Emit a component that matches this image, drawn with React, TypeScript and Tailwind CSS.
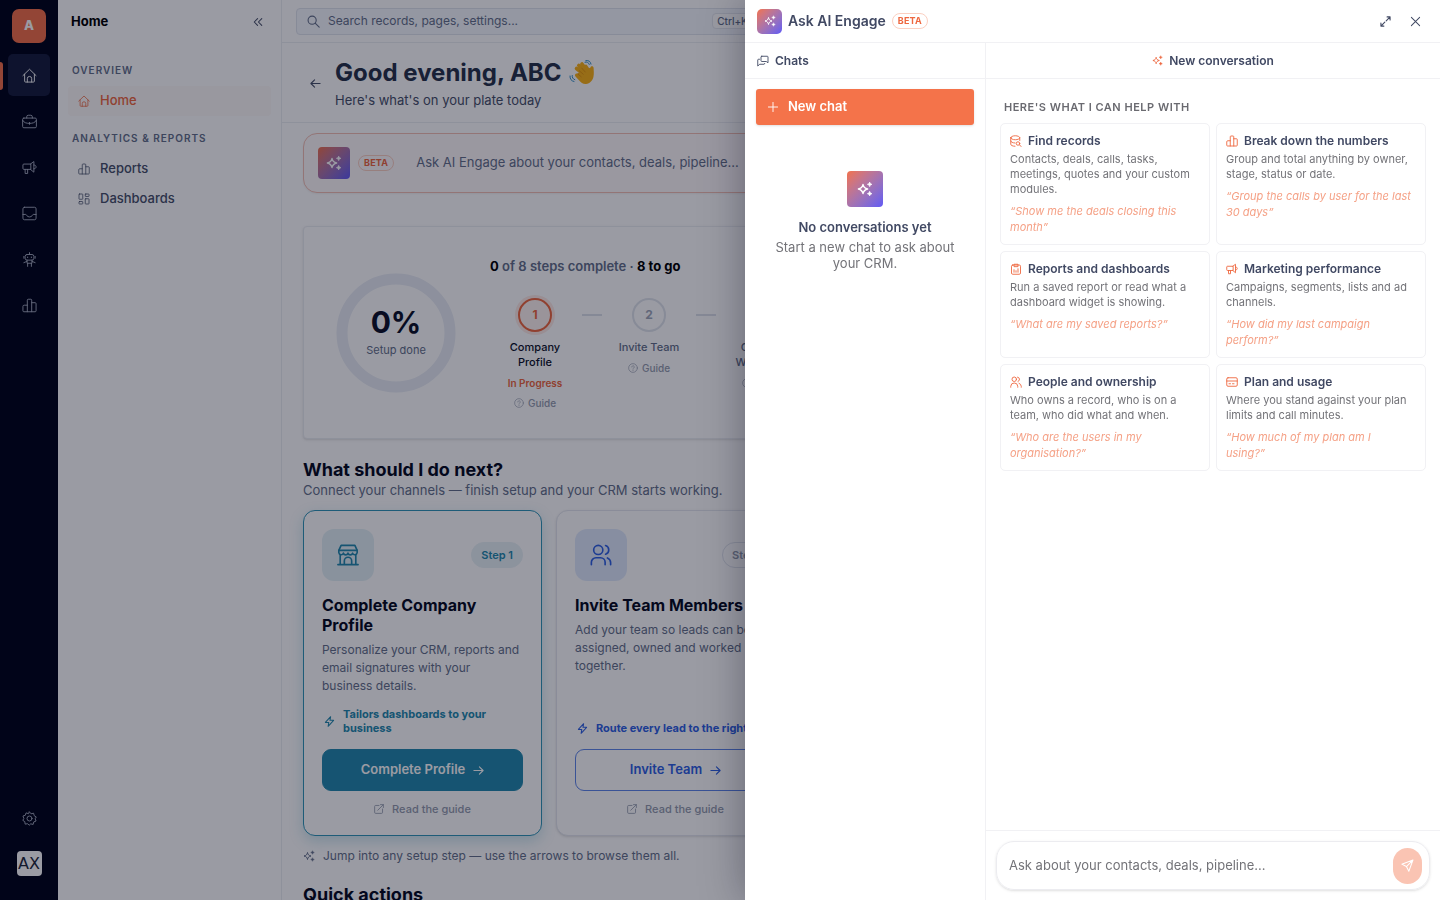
import React, { useState } from 'react';

type IconProps = { className?: string };

type IconName =
  | 'home' | 'briefcase' | 'megaphone' | 'inbox' | 'robot' | 'chart' | 'grid' | 'gear' | 'search'
  | 'back' | 'collapse' | 'help' | 'store' | 'users' | 'bolt' | 'arrow' | 'external' | 'chats'
  | 'plus' | 'expand' | 'close' | 'database' | 'clipboard' | 'people' | 'card' | 'send';

const ICONS: Record<IconName, React.ReactNode> = {
  home: (
    <>
      <path d="M1.5 12.2 12 2l10.5 10.2" />
      <path d="M4.2 10v11a1.5 1.5 0 0 0 1.5 1.5h12.6a1.5 1.5 0 0 0 1.5-1.5V10" />
      <path d="M8.5 22.5V17a3.5 3.5 0 0 1 7 0v5.5" />
    </>
  ),
  briefcase: (
    <>
      <rect x="1" y="6.5" width="22" height="15.5" rx="2" />
      <path d="M7.5 6.5V4.5A2.5 2.5 0 0 1 10 2h4a2.5 2.5 0 0 1 2.5 2.5v2M1 10c2 4 6 5 11 5s9-1 11-5M12 13.5v3" />
    </>
  ),
  megaphone: (
    <>
      <path d="M13.5 6.5H3A1.5 1.5 0 0 0 1.5 8v5.5A1.5 1.5 0 0 0 3 15h10.5z" />
      <path d="M13.5 6.5 19 2.5v17L13.5 15M19 8c2.2 0 3.5 1.2 3.5 3S21.2 14 19 14M5 15v6.5h4V15" />
    </>
  ),
  inbox: (
    <>
      <rect x="1.5" y="2" width="21" height="20" rx="2.5" />
      <path d="M1.5 13.5h4.5c1.5 0 1.5 4 6 4s4.5-4 6-4h4.5" />
    </>
  ),
  robot: (
    <>
      <rect x="5" y="4" width="14" height="9" rx="3" />
      <path d="M12 1v3M3 7v3M21 7v3M9 8v1M15 8v1M8 13v5h8v-5M8 15l-5 2M16 15l5 2M9 18v5M15 18v5" />
    </>
  ),
  chart: (
    <>
      <path d="M8.5 22V3.5A1.5 1.5 0 0 1 10 2h4a1.5 1.5 0 0 1 1.5 1.5V22" />
      <path d="M8.5 11.5h-5A2 2 0 0 0 1.5 13.5v7A1.5 1.5 0 0 0 3 22h18a1.5 1.5 0 0 0 1.5-1.5V9a1.5 1.5 0 0 0-1.5-1.5h-5.5" />
    </>
  ),
  grid: (
    <>
      <rect x="2" y="2" width="7.5" height="10.5" rx="1" />
      <rect x="2" y="17" width="7.5" height="5" rx="1" />
      <rect x="14.5" y="2" width="7.5" height="5" rx="1" />
      <rect x="14.5" y="11.5" width="7.5" height="10.5" rx="1" />
    </>
  ),
  gear: (
    <>
      <circle cx="12" cy="12" r="4" />
      <path d="M12 1.5 14.5 4.5 18.5 3.5 19.5 7.5 22.8 9.5 21 12.5 22.5 16 18.8 17.5 17.8 21.5 14 20.5 11.5 22.8 9 20.3 5 21 4.5 17 1.3 15 3 11.8 1.5 8 5.3 6.8 6.5 3 10 4.2z" />
    </>
  ),
  search: <><circle cx="9.5" cy="9.5" r="7.5" /><path d="m15 15 7.5 7.5" /></>,
  back: <path d="M22 12H2M10 4l-8 8 8 8" />,
  collapse: <path d="m11 4-8 8 8 8M21 4l-8 8 8 8" />,
  help: (
    <>
      <circle cx="12" cy="12" r="10.5" />
      <path d="M9 9.5a3 3 0 1 1 4.5 2.6c-1 .6-1.5 1-1.5 2.2M12 17.2v.8" />
    </>
  ),
  store: (
    <>
      <path d="M4.5 1.5h15l2.5 5.5v2.5a2.6 2.6 0 0 1-5 .5 2.6 2.6 0 0 1-5 0 2.6 2.6 0 0 1-5 0 2.6 2.6 0 0 1-5-.5V7z" />
      <path d="M2 7h20M3.5 12v10.5M20.5 12v10.5M1 22.5h22M8 22.5V18.5a4 4 0 0 1 8 0v4" />
    </>
  ),
  users: (
    <>
      <circle cx="9" cy="6.5" r="5" />
      <path d="M1.5 22.5v-2.5a5 5 0 0 1 5-5h5a5 5 0 0 1 5 5v2.5M17 1.7a5 5 0 0 1 0 9.5M19 15.2c2.5 1 3.5 2.8 3.5 5.3v2" />
    </>
  ),
  bolt: <path d="M14.5 1.5 3 14h7.5L9 22.5 21 9.5h-8z" />,
  arrow: <path d="M2 12h20M14 4l8 8-8 8" />,
  external: <path d="M12 3.5H4A2.5 2.5 0 0 0 1.5 6v14A2.5 2.5 0 0 0 4 22.5h14a2.5 2.5 0 0 0 2.5-2.5v-8M15.5 1.5h7v7M22.5 1.5 9 15" />,
  chats: (
    <>
      <path d="M9.5 2.5h11A1.5 1.5 0 0 1 22 4v11.5l-3.5-2.5h-9A1.5 1.5 0 0 1 8 11.5V4a1.5 1.5 0 0 1 1.5-1.5z" />
      <path d="M5 8.5H3A1.5 1.5 0 0 0 1.5 10v12l4-3.5h8.5a1.5 1.5 0 0 0 1.5-1.5" />
    </>
  ),
  plus: <path d="M12 1v22M1 12h22" />,
  expand: <path d="M15.5 2H22v6.500M22 2l-8.500 8.500M8.500 22H2v-6.500M2 22l8.500-8.500" />,
  close: <path d="m3 3 18 18M21 3 3 21" />,
  database: (
    <>
      <path d="M1.5 5.5c0-2 4-4 9-4s9 2 9 4-4 4-9 4-9-2-9-4zM1.5 5.5v13c0 2 3.5 4 8.5 4M19.5 5.5V11M1.5 12c0 2 4 4 8.5 4" />
      <circle cx="16" cy="17" r="3.5" />
      <path d="m19 20 3.5 3" />
    </>
  ),
  clipboard: (
    <>
      <rect x="3" y="4" width="18" height="18.5" rx="2.5" />
      <path d="M8 6.5V2.5h8v4zM8 18.5v-5M12 18.5v-3M16 18.5v-7" />
    </>
  ),
  people: (
    <>
      <circle cx="8.5" cy="6.5" r="4.5" />
      <path d="M1.5 22.5v-2A7 7 0 0 1 8.5 14a7 7 0 0 1 7 6.5v2M15 2.2a4.5 4.5 0 0 1 1 8.7M18 14.5a7 7 0 0 1 4.5 6v2" />
    </>
  ),
  card: (
    <>
      <rect x="1.5" y="3.5" width="21" height="17" rx="2.5" />
      <path d="M1.5 10h21M6 15.5h3M13 15.5h3" />
    </>
  ),
  send: <path d="M22 2 1.5 9.5l8.5 4.5 4.5 8.5zM22 2 10 14" />,
};

const Icon: React.FC<IconProps & { name: IconName; stroke?: number }> = ({ name, stroke = 1.5, className = 'size-4' }) => (
  <svg aria-hidden="true" viewBox="0 0 24 24" fill="none" stroke="currentColor" strokeWidth={stroke} strokeLinecap="round" strokeLinejoin="round" className={`shrink-0 ${className}`}>
    {ICONS[name]}
  </svg>
);

const Sparkles: React.FC<IconProps> = ({ className = 'size-4' }) => (
  <svg aria-hidden="true" viewBox="0 0 24 24" className={`shrink-0 ${className}`}>
    <path d="M9 5c.8 4.2 2.3 5.9 7 7-4.7 1.1-6.2 2.8-7 7-.8-4.2-2.3-5.9-7-7 4.7-1.1 6.2-2.8 7-7z" fill="none" stroke="currentColor" strokeWidth="2" strokeLinejoin="round" />
    <path d="M19 1.5c.5 2 1.2 2.7 3.5 3.5-2.3.8-3 1.5-3.5 3.5-.5-2-1.2-2.7-3.5-3.5 2.3-.8 3-1.5 3.5-3.5zM19 15.5c.5 2 1.2 2.7 3.5 3.5-2.3.8-3 1.5-3.5 3.5-.5-2-1.2-2.7-3.5-3.5 2.3-.8 3-1.5 3.5-3.5z" fill="currentColor" stroke="currentColor" />
  </svg>
);

const WavingHand = () => (
  <svg role="img" aria-label="Waving hand" viewBox="0 0 26 26" className="size-[26px]">
    <g stroke="#fbb216" strokeLinecap="round" strokeWidth="3.6">
      <path d="M14.5 14 7.5 8.5M16.5 12 9.8 5.5M18.5 11l-5.5-7M20.5 12l-3.7-5.5" />
    </g>
    <path d="M9 13 18.5 9l3-1.5c.2-1.5 3-1.8 3.1.5.1 3 .5 5.5-.1 8.5-.7 4-3.5 7-7.5 7.5-3 .2-5-1.5-7-3.8L6.5 16.5c-1.5-2 .5-3.8 2.2-2.7z" fill="#fbb216" />
    <path d="m8.5 13.7 4 3.3M10 10.5l4.5 4M12.5 7.8l4 4.5" stroke="#d98b0b" strokeWidth="0.7" fill="none" />
    <path d="M16 2.2c2-.6 3.7.3 4.3 2.2M16.8 0.6c3-.6 4.8 1 5.2 3.5M3.2 15.5c-.3 2 .8 3.6 2.6 4.2M1 16c-.2 3 1.3 5 4 5.5" stroke="#3592c9" strokeWidth="1" strokeLinecap="round" fill="none" />
  </svg>
);

const AiBadge: React.FC<{ className: string; icon: string }> = ({ className, icon }) => (
  <span className={`flex shrink-0 items-center justify-center bg-linear-135 from-[#f27148] to-[#6258f5] text-white ${className}`}>
    <Sparkles className={icon} />
  </span>
);

const BetaTag = () => (
  <span className="rounded-full border border-[#fbd0c2] px-[5px] text-[9px] leading-[14px] font-bold tracking-wide text-[#ee6840]">BETA</span>
);

const RAIL: { name: IconName; label: string }[] = [
  { name: 'home', label: 'Home' },
  { name: 'briefcase', label: 'Sales' },
  { name: 'megaphone', label: 'Marketing' },
  { name: 'inbox', label: 'Inbox' },
  { name: 'robot', label: 'Automation' },
  { name: 'chart', label: 'Analytics' },
];

const Rail = () => (
  <nav aria-label="Modules" className="flex w-[58px] shrink-0 flex-col items-center bg-[#000419] text-[#a8aec0]">
    <a href="#home" className="mt-[9px] flex size-[34px] items-center justify-center rounded-[7px] bg-[#f4714a] text-[13px] font-extrabold text-white">A</a>
    <div className="mt-[11px] flex w-full flex-col items-center gap-1">
      {RAIL.map((item, i) => (
        <a
          key={item.label}
          href={`#${item.label.toLowerCase()}`}
          aria-label={item.label}
          className={`relative flex size-[42px] items-center justify-center rounded-[5px] ${i === 0 ? 'bg-[#161d3c] text-white' : ''}`}
        >
          {i === 0 && <span className="absolute top-2 -left-2 h-7 w-[3px] rounded-r bg-[#f4714a]" />}
          <Icon name={item.name} className="size-[15px]" />
        </a>
      ))}
    </div>
    <button aria-label="Settings" className="mt-auto flex size-[34px] items-center justify-center"><Icon name="gear" className="size-[15px]" /></button>
    <button className="mt-4 mb-6 flex size-[25px] items-center justify-center rounded bg-white font-['DejaVu_Sans',sans-serif] text-base text-[#1e293b]">AX</button>
  </nav>
);

const SidebarLink: React.FC<{ icon: IconName; label: string; active?: boolean }> = ({ icon, label, active }) => (
  <a href={`#${label.toLowerCase()}`} className={`flex h-[30px] items-center gap-2.5 rounded px-2.5 text-[13px] font-medium ${active ? 'bg-[#fefaf8] text-[#ee6840]' : 'text-[#475069]'}`}>
    <Icon name={icon} className="size-3" /> {label}
  </a>
);

const Sidebar = () => (
  <aside className="w-56 shrink-0 border-r border-[#eceef2] px-2.5 text-[#64708a]">
    <div className="flex h-[43px] items-center justify-between pr-2 pl-[3px]">
      <span className="text-[13px] font-bold text-black">Home</span>
      <button aria-label="Collapse sidebar" className="text-[#475069]"><Icon name="collapse" className="size-[10px]" stroke={2.5} /></button>
    </div>
    <h2 className="mt-[19px] px-1 text-[10px] leading-4 font-semibold tracking-[1px]">OVERVIEW</h2>
    <div className="mt-2"><SidebarLink icon="home" label="Home" active /></div>
    <h2 className="mt-3.5 px-1 text-[10px] leading-4 font-semibold tracking-[1px]">ANALYTICS &amp; REPORTS</h2>
    <div className="mt-2">
      <SidebarLink icon="chart" label="Reports" />
      <SidebarLink icon="grid" label="Dashboards" />
    </div>
  </aside>
);

const STEPS = ['Company Profile', 'Invite Team', 'Connect WhatsApp', 'Connect Email', 'Import Contacts', 'Set Up Calls', 'Lead Forms', 'Automations'];

const SetupCard = () => (
  <section className="mt-[33px] flex h-[213px] items-center overflow-hidden rounded border border-[#eceef2] bg-white pl-8 shadow">
    <div className="relative flex size-[120px] shrink-0 flex-col items-center justify-center">
      <svg viewBox="0 0 120 120" className="absolute inset-0" aria-hidden="true"><circle cx="60" cy="60" r="54" fill="none" stroke="#e9edf5" strokeWidth="11" /></svg>
      <span className="relative text-[30px] leading-8 font-bold text-[#0c1228]">0%</span>
      <span className="relative mt-1 text-[11px] text-[#64708a]">Setup done</span>
    </div>
    <div className="ml-8 h-full pt-[30px]">
      <p className="pl-0.5 text-[13px] leading-[18px] font-semibold text-[#64708a]"><b className="font-bold text-black">0</b> of 8 steps complete · <b className="font-bold text-black">8 to go</b></p>
      <ol className="mt-[23px] flex">
        {STEPS.map((step, i) => (
          <li key={step} className="flex shrink-0">
            {i > 0 && <span className="mt-4 h-0.5 w-5 bg-[#dde1ea]" />}
            <div className="flex w-[94px] flex-col items-center text-center">
              <span className={`flex size-[34px] items-center justify-center rounded-full border-2 text-xs font-bold ${i === 0 ? 'border-[#ee6840] bg-[#fff4f0] text-[#ee6840] shadow-[0_0_0_3px_#fdeae4]' : 'border-[#e0e4ec] text-[#a0a8ba]'}`}>{i + 1}</span>
              <span className={`mt-2 px-2 text-[11px] leading-[15px] font-medium ${i === 0 ? 'text-[#0c1228]' : 'text-[#64708a]'}`}>{step}</span>
              {i === 0 && <span className="mt-1.5 text-[10px] leading-[14px] font-semibold text-[#ee6840]">In Progress</span>}
              <a href="#guide" className="mt-1.5 flex items-center gap-1 text-[10px] leading-[14px] font-medium text-[#949cae]"><Icon name="help" className="size-[10px]" /> Guide</a>
            </div>
          </li>
        ))}
      </ol>
    </div>
  </section>
);

type NextStep = { title: string; body: string; benefit: string; action: string; icon: IconName };

const NEXT_STEPS: NextStep[] = [
  { title: 'Complete Company Profile', body: 'Personalize your CRM, reports and email signatures with your business details.', benefit: 'Tailors dashboards to your business', action: 'Complete Profile', icon: 'store' },
  { title: 'Invite Team Members', body: 'Add your team so leads can be assigned, owned and worked together.', benefit: 'Route every lead to the right rep', action: 'Invite Team', icon: 'users' },
];

const NextStepCard: React.FC<{ item: NextStep; index: number }> = ({ item, index }) => {
  const current = index === 0;
  return (
    <article className={`flex h-[326px] w-[239px] shrink-0 flex-col rounded-xl border bg-white p-[18px] ${current ? 'border-[#3196b8] shadow-[0_5px_14px_#3196b840]' : 'border-[#e4e7ee] shadow'}`}>
      <div className="flex items-center justify-between">
        <span className={`flex size-[52px] items-center justify-center rounded-xl ${current ? 'bg-[#e3f1f5] text-[#2389ad]' : 'bg-[#e0eafc] text-[#2f62e3]'}`}><Icon name={item.icon} className="size-[22px]" stroke={1.8} /></span>
        <span className={`rounded-full border px-[9px] text-[11px] leading-6 font-semibold ${current ? 'border-[#e8f2f6] bg-[#e8f2f6] text-[#2389ad]' : 'border-[#e0e4ec] text-[#949cae]'}`}>Step {index + 1}</span>
      </div>
      <h3 className="mt-3.5 text-base leading-5 font-bold text-[#060b1f]">{item.title}</h3>
      <p className="mt-1.5 text-xs leading-[18px] text-[#64708a]">{item.body}</p>
      <p className={`mt-auto flex items-center gap-2 px-0.5 text-[11px] leading-[14px] font-bold ${current ? 'text-[#2389ad]' : 'text-[#2f62e3]'}`}><Icon name="bolt" className="size-[11px]" stroke={2.2} /> {item.benefit}</p>
      <button className={`mt-3.5 flex h-[42px] items-center justify-center gap-2 rounded-[9px] border text-[13px] font-semibold ${current ? 'border-[#2389ad] bg-[#2389ad] text-white' : 'border-[#5f87ea] text-[#2f62e3]'}`}>{item.action} <Icon name="arrow" className="size-[11px]" stroke={2.5} /></button>
      <a href="#guide" className="mt-2.5 flex items-center justify-center gap-2 text-[11px] leading-4 font-medium text-[#949cae]"><Icon name="external" className="size-[10px]" stroke={2} /> Read the guide</a>
    </article>
  );
};

const Dashboard = () => (
  <div className="flex min-w-0 flex-1 flex-col">
    <div className="flex h-[43px] shrink-0 items-center border-b border-[#eceef2] px-3.5">
      <label className="flex h-[27px] w-full max-w-[466px] items-center gap-2 rounded-sm border border-[#dfe4ed] bg-[#f5f8fd] pr-2 pl-2.5 text-[#64708a]">
        <Icon name="search" className="size-[13px]" stroke={2} />
        <input aria-label="Search" placeholder="Search records, pages, settings..." className="min-w-0 flex-1 text-xs outline-none placeholder:text-[#64708a]" />
        <kbd className="rounded-sm border border-[#e4e7ee] bg-white px-1 font-[Inter,sans-serif] text-[10px] leading-[14px] font-medium">Ctrl+K</kbd>
      </label>
    </div>
    <header className="flex h-20 shrink-0 items-center gap-3.5 border-b border-[#eceef2] px-7">
      <button aria-label="Back" className="mt-0.5 text-[#475069]"><Icon name="back" className="size-[11px]" stroke={2.4} /></button>
      <div>
        <h1 className="flex items-center gap-2 text-2xl leading-8 font-bold text-[#27324a]">Good evening, ABC <WavingHand /></h1>
        <p className="mt-0.5 text-[13px] leading-[18px] text-[#475069]">Here&apos;s what&apos;s on your plate today</p>
      </div>
    </header>
    <main className="min-h-0 flex-1 overflow-hidden px-[21px] pt-2.5">
      <section className="flex h-[60px] items-center rounded-[14px] border border-[#f4c0b4] bg-[#fffafb] px-3.5 shadow-xs">
        <AiBadge className="size-8 rounded" icon="size-4" />
        <span className="mx-2 flex"><BetaTag /></span>
        <input aria-label="Ask AI Engage" placeholder="Ask AI Engage about your contacts, deals, pipeline..." className="ml-3.5 min-w-0 flex-1 text-[13px] outline-none placeholder:text-[#64708a]" />
      </section>
      <SetupCard />
      <h2 className="mt-5 text-lg leading-[22px] font-bold text-[#060b1f]">What should I do next?</h2>
      <p className="text-[13px] leading-[18px] text-[#64708a]">Connect your channels — finish setup and your CRM starts working.</p>
      <div className="mt-[11px] flex gap-3.5">
        {NEXT_STEPS.map((item, i) => <NextStepCard key={item.title} item={item} index={i} />)}
      </div>
      <p className="mt-3 flex items-center gap-2 text-xs leading-4 text-[#64708a]"><Sparkles className="size-3" /> Jump into any setup step — use the arrows to browse them all.</p>
      <h2 className="mt-5 text-lg leading-[22px] font-bold text-[#060b1f]">Quick actions</h2>
    </main>
  </div>
);

const TOPICS: { icon: IconName; title: string; body: string; example: string }[] = [
  { icon: 'database', title: 'Find records', body: 'Contacts, deals, calls, tasks, meetings, quotes and your custom modules.', example: 'Show me the deals closing this month' },
  { icon: 'chart', title: 'Break down the numbers', body: 'Group and total anything by owner, stage, status or date.', example: 'Group the calls by user for the last 30 days' },
  { icon: 'clipboard', title: 'Reports and dashboards', body: 'Run a saved report or read what a dashboard widget is showing.', example: 'What are my saved reports?' },
  { icon: 'megaphone', title: 'Marketing performance', body: 'Campaigns, segments, lists and ad channels.', example: 'How did my last campaign perform?' },
  { icon: 'people', title: 'People and ownership', body: 'Who owns a record, who is on a team, who did what and when.', example: 'Who are the users in my organisation?' },
  { icon: 'card', title: 'Plan and usage', body: 'Where you stand against your plan limits and call minutes.', example: 'How much of my plan am I using?' },
];

const AiDrawer: React.FC<{ onClose: () => void }> = ({ onClose }) => {
  const [question, setQuestion] = useState('');

  return (
    <div role="dialog" aria-label="Ask AI Engage" className="relative ml-auto flex h-full w-full max-w-[695px] flex-col bg-white text-[#414963] shadow-[0_0_40px_#02061759]">
      <div className="flex h-[43px] shrink-0 items-center border-b border-[#f1f1f4] pr-2.5 pl-3">
        <AiBadge className="size-[25px] rounded-[5px]" icon="size-3" />
        <h2 className="mx-1.5 text-sm font-semibold">Ask AI Engage</h2>
        <BetaTag />
        <button aria-label="Expand" className="ml-auto flex size-[30px] items-center justify-center"><Icon name="expand" className="size-[11px]" stroke={2.4} /></button>
        <button aria-label="Close" onClick={onClose} className="flex size-[30px] items-center justify-center"><Icon name="close" className="size-[11px]" stroke={2.2} /></button>
      </div>
      <div className="flex min-h-0 flex-1">
        <div className="w-[241px] shrink-0 border-r border-[#f1f1f4]">
          <div className="flex h-9 items-center gap-1.5 border-b border-[#f1f1f4] px-3 text-xs font-semibold"><Icon name="chats" className="size-3" stroke={1.8} /> Chats</div>
          <div className="px-[11px] pt-2.5">
            <button className="flex h-9 w-full items-center gap-2.5 rounded-[3px] bg-[#f4734a] px-3 text-[13px] font-semibold text-white shadow-sm"><Icon name="plus" className="size-[10px]" stroke={2.2} /> New chat</button>
          </div>
          <div className="mt-[46px] flex flex-col items-center px-6 text-center">
            <AiBadge className="size-9 rounded" icon="size-4" />
            <p className="mt-3 text-[13px] leading-4 font-semibold">No conversations yet</p>
            <p className="mt-1 text-[13px] leading-4 text-[#737378]">Start a new chat to ask about your CRM.</p>
          </div>
        </div>
        <div className="flex min-w-0 flex-1 flex-col">
          <div className="flex h-9 shrink-0 items-center justify-center gap-1.5 border-b border-[#f1f1f4] text-xs font-semibold"><Sparkles className="size-[11px] text-[#ee6840]" /> New conversation</div>
          <div className="flex-1 px-3.5 pt-5">
            <h3 className="px-1 text-[11px] leading-4 font-semibold tracking-[0.5px] text-[#6a6a70]">HERE&apos;S WHAT I CAN HELP WITH</h3>
            <div className="mt-2 grid grid-cols-2 gap-1.5">
              {TOPICS.map((topic) => (
                <button key={topic.title} onClick={() => setQuestion(topic.example)} className="flex flex-col rounded-[5px] border border-[#f1f1f4] pt-2 pr-[13px] pb-[9px] pl-[9px] text-left">
                  <span className="flex items-center gap-1.5 text-xs leading-[18px] font-semibold"><Icon name={topic.icon} className="size-3 text-[#ee6840]" stroke={1.8} /> {topic.title}</span>
                  <span className="mt-0.5 text-[11px] leading-[15px] text-[#737378]">{topic.body}</span>
                  <span className="mt-1.5 text-[11px] leading-4 text-[#f5a186] italic">{`“${topic.example}”`}</span>
                </button>
              ))}
            </div>
          </div>
          <div className="border-t border-[#f1f1f4] p-2.5">
            <div className="flex h-[49px] items-center rounded-[18px] border border-[#ececf0] pr-[7px] pl-3 shadow-sm">
              <input aria-label="Your question" value={question} onChange={(e) => setQuestion(e.target.value)} placeholder="Ask about your contacts, deals, pipeline..." className="min-w-0 flex-1 text-[13px] outline-none placeholder:text-[#737378]" />
              <button aria-label="Send" className="flex h-9 w-[29px] items-center justify-center rounded-full bg-[#fac4b3] text-white"><Icon name="send" className="size-[13px]" stroke={2} /></button>
            </div>
          </div>
        </div>
      </div>
    </div>
  );
};

export default function App() {
  const [drawerOpen, setDrawerOpen] = useState(true);

  return (
    <div className="flex h-screen overflow-hidden bg-white font-[Inter,'Noto_Sans',sans-serif]">
      <Rail />
      <Sidebar />
      <Dashboard />
      {drawerOpen && (
        <div className="fixed inset-0 bg-slate-950/40">
          <AiDrawer onClose={() => setDrawerOpen(false)} />
        </div>
      )}
    </div>
  );
}
